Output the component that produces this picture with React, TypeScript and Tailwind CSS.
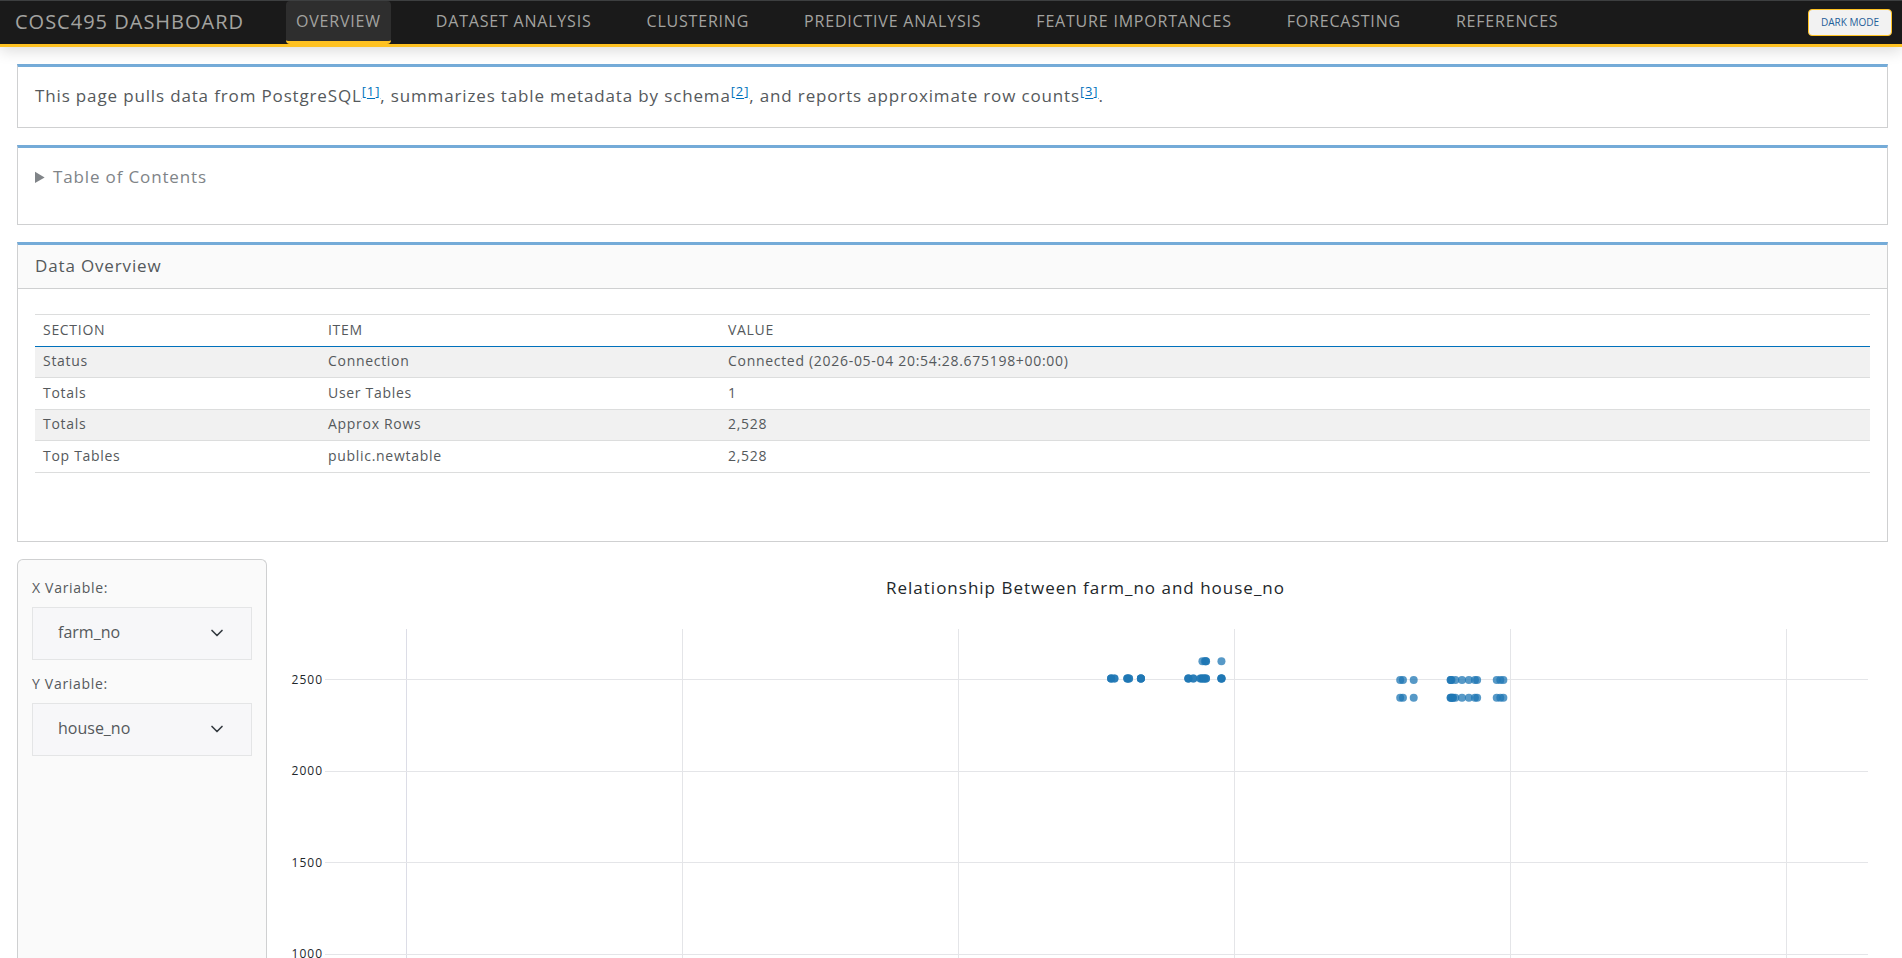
import { ChevronDown } from 'lucide-react'

const navItems = [
  'Overview',
  'Dataset Analysis',
  'Clustering',
  'Predictive Analysis',
  'Feature Importances',
  'Forecasting',
  'References',
]

const rows = [
  ['Status', 'Connection', 'Connected (2026-05-04 20:54:28.675198+00:00)'],
  ['Totals', 'User Tables', '1'],
  ['Totals', 'Approx Rows', '2,528'],
  ['Top Tables', 'public.newtable', '2,528'],
]

const variables = ['farm_no', 'house_no']

// farm_no values, grouped by house_no. Repeats are real: markers stack up.
const series = [
  { y: 2600, xs: [2884, 2893, 2897, 2897, 2953] },
  {
    y: 2506,
    xs: [
      2553, 2553, 2553, 2565, 2565, 2612, 2612, 2612, 2618, 2618, 2661, 2661, 2661, 2661, 2833, 2833, 2833,
      2851, 2851, 2877, 2877, 2884, 2884, 2891, 2891, 2897, 2897, 2953, 2953, 2953, 2953,
    ],
  },
  { y: 2497, xs: [3601, 3611, 3650, 3784, 3784, 3787, 3801, 3825, 3850, 3872, 3880, 3951, 3964, 3975] },
  { y: 2400, xs: [3601, 3611, 3650, 3784, 3784, 3787, 3792, 3792, 3801, 3825, 3850, 3872, 3880, 3951, 3964, 3975] },
]

const X_MIN = -297
const X_MAX = 5297
const xTicks = [0, 1000, 2000, 3000, 4000, 5000]
const yTicks = [2500, 2000, 1500, 1000]

const toX = (v: number) => `${((v - X_MIN) / (X_MAX - X_MIN)) * 100}%`
const toY = (v: number) => 50.5 + (2500 - v) * 0.1833

function Navbar() {
  return (
    <header className="relative flex h-[47px] shrink-0 items-stretch border-t border-b-3 border-t-[#3d3f40] border-b-[#ffc222] bg-[#1a1a1a] pr-2.5 pl-[15px] text-[#a3a3a0] uppercase shadow-[0_4px_14px_rgba(0,0,0,0.14)]">
      <a href="#" className="flex w-[271px] items-center pb-0.5 text-xl tracking-wider">
        COSC495 Dashboard
      </a>
      <nav className="flex gap-[35px] text-base tracking-wider">
        {navItems.map((item, i) => (
          <a
            key={item}
            href="#"
            className={
              i === 0
                ? 'flex items-center rounded border-b-3 border-[#ffc222] bg-[#2e2e2e] px-2.5'
                : 'flex items-center border-b-3 border-transparent px-2.5'
            }
          >
            {item}
          </a>
        ))}
      </nav>
      <button
        type="button"
        className="my-2 ml-auto rounded border border-[#ffc222] bg-[#f2f2f2] px-3 text-[10px] text-[#1f5f99] uppercase"
      >
        Dark Mode
      </button>
    </header>
  )
}

function Cite({ n }: { n: number }) {
  return (
    <sup className="text-[13px]">
      <a href="#references" className="text-[#0071bc] underline underline-offset-2">
        [{n}]
      </a>
    </sup>
  )
}

function VariableSelect({ id, label, value }: { id: string; label: string; value: string }) {
  return (
    <div>
      <label htmlFor={id} className="block h-5 text-sm leading-5 tracking-wider">
        {label}
      </label>
      <div className="relative mt-[9px]">
        <select
          id={id}
          defaultValue={value}
          className="h-[53px] w-full appearance-none border border-[#e4e5e6] bg-[#f7f7f9] px-[25px] pb-1 text-base"
        >
          {variables.map((v) => (
            <option key={v}>{v}</option>
          ))}
        </select>
        <ChevronDown className="pointer-events-none absolute top-4 right-[25px] h-5 w-5 text-[#343a40]" />
      </div>
    </div>
  )
}

function ScatterPlot() {
  return (
    <section className="flex min-w-0 flex-1 flex-col text-[#22272b]">
      <h2 className="h-[70px] pt-[17px] pl-4 text-center text-[17px] leading-6 tracking-[1px]">
        Relationship Between farm_no and house_no
      </h2>
      <div className="flex min-h-0 flex-1 pr-5 pl-[58px]">
        <svg className="h-full w-full overflow-visible" role="img" aria-label="Scatter plot of house_no by farm_no">
          {xTicks.map((t) => (
            <line
              key={t}
              x1={toX(t)}
              x2={toX(t)}
              y1="0"
              y2="100%"
              stroke={t === 0 ? '#dcdde6' : '#e4e5e8'}
              shapeRendering="crispEdges"
            />
          ))}
          {yTicks.map((t) => (
            <g key={t}>
              <line x1="0" x2="100%" y1={toY(t)} y2={toY(t)} stroke="#e4e5e8" shapeRendering="crispEdges" />
              <text x="-2" y={toY(t) + 4} textAnchor="end" className="fill-current text-xs tracking-[1px]">
                {t}
              </text>
            </g>
          ))}
          {series.map((s) =>
            s.xs.map((x, i) => (
              <circle key={`${s.y}-${i}`} cx={toX(x)} cy={toY(s.y)} r="4" fill="#1f77b4" fillOpacity="0.75" />
            )),
          )}
        </svg>
      </div>
    </section>
  )
}

export default function App() {
  return (
    <div className="flex h-screen flex-col overflow-hidden bg-white font-['Open_Sans',sans-serif] text-[#55595c]">
      <Navbar />
      <main className="flex min-h-0 flex-1 flex-col gap-[17px] pt-[17px] pr-3.5 pl-[17px]">
        <section className="h-16 shrink-0 border border-t-3 border-[#cfd0d1] border-t-[#74abd8] px-[17px] pt-[15px]">
          <p className="text-[17px] leading-7 tracking-wider">
            This page pulls data from PostgreSQL
            <Cite n={1} />, summarizes table metadata by schema
            <Cite n={2} />, and reports approximate row counts
            <Cite n={3} />.
          </p>
        </section>

        <section className="h-20 shrink-0 border border-t-3 border-[#cfd0d1] border-t-[#74abd8] px-[17px] pt-[15px]">
          <details>
            <summary className="cursor-pointer text-[17px] leading-7 tracking-wider text-[#808488]">
              Table of Contents
            </summary>
          </details>
        </section>

        <section className="shrink-0 border border-t-3 border-[#cfd0d1] border-t-[#74abd8] pb-[68px]">
          <h2 className="h-11 border-b border-[#cfd0d1] bg-[#fafafa] px-[17px] text-[17px] leading-[42px] tracking-wider">
            Data Overview
          </h2>
          <div className="px-[17px] pt-[25px]">
            <table className="w-full table-fixed border-collapse text-left text-sm tracking-wider">
              <colgroup>
                <col className="w-[285px]" />
                <col className="w-[400px]" />
                <col />
              </colgroup>
              <thead>
                <tr className="h-8 border-t border-b border-t-[#dcdddd] border-b-[#0071bc] uppercase">
                  <th className="px-2 pb-0.5 font-medium">Section</th>
                  <th className="px-2 pb-0.5 font-medium">Item</th>
                  <th className="px-2 pb-0.5 font-medium">Value</th>
                </tr>
              </thead>
              <tbody>
                {rows.map((row) => (
                  <tr key={row[1]} className="h-8 border-b border-[#dcdddd] odd:h-[31px] odd:bg-[#f1f1f1]">
                    {row.map((cell, i) => (
                      <td key={i} className="px-2 pb-0.5">
                        {cell}
                      </td>
                    ))}
                  </tr>
                ))}
              </tbody>
            </table>
          </div>
        </section>

        <div className="flex min-h-0 flex-1">
          <aside className="flex w-[250px] shrink-0 flex-col gap-3.5 rounded-t-md border border-b-0 border-[#cfd0d1] bg-[#fafafa] px-3.5 pt-[18px]">
            <VariableSelect id="x-variable" label="X Variable:" value="farm_no" />
            <VariableSelect id="y-variable" label="Y Variable:" value="house_no" />
          </aside>
          <ScatterPlot />
        </div>
      </main>
    </div>
  )
}
